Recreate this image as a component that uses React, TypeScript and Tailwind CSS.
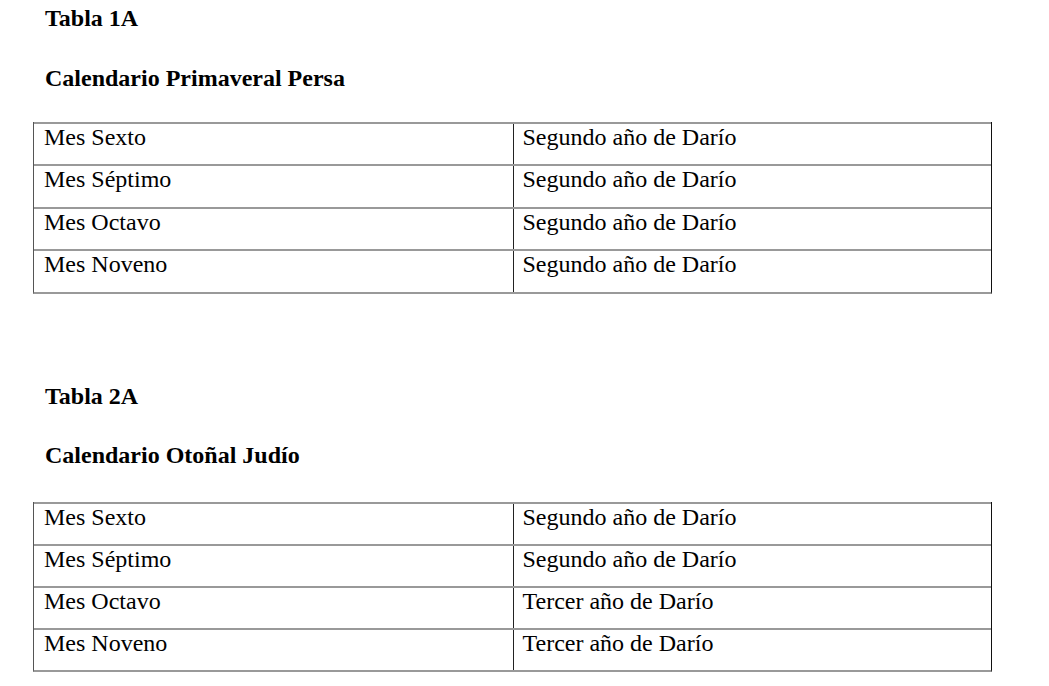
import React from "react";

type Row = [string, string];

const t1: Row[] = [
  ["Mes Sexto", "Segundo año de Darío"],
  ["Mes Séptimo", "Segundo año de Darío"],
  ["Mes Octavo", "Segundo año de Darío"],
  ["Mes Noveno", "Segundo año de Darío"],
];

const t2: Row[] = [
  ["Mes Sexto", "Segundo año de Darío"],
  ["Mes Séptimo", "Segundo año de Darío"],
  ["Mes Octavo", "Tercer año de Darío"],
  ["Mes Noveno", "Tercer año de Darío"],
];

function Table({ rows, rowH }: { rows: Row[]; rowH: string }) {
  return (
    <div className="ml-[33px] w-[959px] border-l border-l-[#555] border-r border-r-[#111] border-b-2 border-b-[#999]">
      {rows.map((r, i) => (
        <div
          key={i}
          className={`grid grid-cols-2 border-t-2 border-t-[#999] ${rowH}`}
        >
          <div className="pl-[10px] text-[24px] leading-[26px]">{r[0]}</div>
          <div className="pl-[9px] border-l border-l-[#222] text-[24px] leading-[26px]">
            {r[1]}
          </div>
        </div>
      ))}
    </div>
  );
}

export default function App() {
  return (
    <div
      className="w-full h-[686px] bg-white text-black overflow-hidden"
      style={{ fontFamily: '"Liberation Serif", "Times New Roman", serif' }}
    >
      <div className="pt-[5px] pl-[45px] text-[24px] leading-[26px] font-bold">Tabla 1A</div>
      <div className="mt-[34px] pl-[45px] text-[24px] leading-[26px] font-bold">
        Calendario Primaveral Persa
      </div>
      <div className="mt-[30.5px]">
        <Table rows={t1} rowH="h-[42.5px]" />
      </div>
      <div className="mt-[89px] pl-[45px] text-[24px] leading-[26px] font-bold">Tabla 2A</div>
      <div className="mt-[33px] pl-[45px] text-[24px] leading-[26px] font-bold">
        Calendario Otoñal Judío
      </div>
      <div className="mt-[34px]">
        <Table rows={t2} rowH="h-[42.1px]" />
      </div>
    </div>
  );
}
